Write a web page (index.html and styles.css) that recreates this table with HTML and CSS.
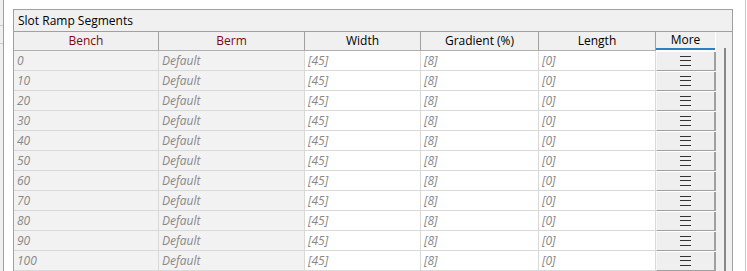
FILE: index.html
```html
<!DOCTYPE html>
<html>
<head>
<meta charset="utf-8">
<link rel="stylesheet" href="styles.css">
</head>
<body>
<div class="page">
  <div class="strip"><div class="strip-line a"></div><div class="strip-line b"></div></div>
  <div class="panel">
    <div class="title">Slot Ramp Segments</div>
    <div class="body">
      <div class="grid">
        <div class="hcell key">Bench</div>
        <div class="hcell key">Berm</div>
        <div class="hcell">Width</div>
        <div class="hcell">Gradient (%)</div>
        <div class="hcell">Length</div>
        <div class="hcell more">More</div>

        <div class="cell ro">0</div><div class="cell ro">Default</div><div class="cell">[45]</div><div class="cell">[8]</div><div class="cell">[0]</div><div class="bcell"><div class="btn"><span class="burger"></span></div></div>
        <div class="cell ro">10</div><div class="cell ro">Default</div><div class="cell">[45]</div><div class="cell">[8]</div><div class="cell">[0]</div><div class="bcell"><div class="btn"><span class="burger"></span></div></div>
        <div class="cell ro">20</div><div class="cell ro">Default</div><div class="cell">[45]</div><div class="cell">[8]</div><div class="cell">[0]</div><div class="bcell"><div class="btn"><span class="burger"></span></div></div>
        <div class="cell ro">30</div><div class="cell ro">Default</div><div class="cell">[45]</div><div class="cell">[8]</div><div class="cell">[0]</div><div class="bcell"><div class="btn"><span class="burger"></span></div></div>
        <div class="cell ro">40</div><div class="cell ro">Default</div><div class="cell">[45]</div><div class="cell">[8]</div><div class="cell">[0]</div><div class="bcell"><div class="btn"><span class="burger"></span></div></div>
        <div class="cell ro">50</div><div class="cell ro">Default</div><div class="cell">[45]</div><div class="cell">[8]</div><div class="cell">[0]</div><div class="bcell"><div class="btn"><span class="burger"></span></div></div>
        <div class="cell ro">60</div><div class="cell ro">Default</div><div class="cell">[45]</div><div class="cell">[8]</div><div class="cell">[0]</div><div class="bcell"><div class="btn"><span class="burger"></span></div></div>
        <div class="cell ro">70</div><div class="cell ro">Default</div><div class="cell">[45]</div><div class="cell">[8]</div><div class="cell">[0]</div><div class="bcell"><div class="btn"><span class="burger"></span></div></div>
        <div class="cell ro">80</div><div class="cell ro">Default</div><div class="cell">[45]</div><div class="cell">[8]</div><div class="cell">[0]</div><div class="bcell"><div class="btn"><span class="burger"></span></div></div>
        <div class="cell ro">90</div><div class="cell ro">Default</div><div class="cell">[45]</div><div class="cell">[8]</div><div class="cell">[0]</div><div class="bcell"><div class="btn"><span class="burger"></span></div></div>
        <div class="cell ro">100</div><div class="cell ro">Default</div><div class="cell">[45]</div><div class="cell">[8]</div><div class="cell">[0]</div><div class="bcell"><div class="btn"><span class="burger"></span></div></div>
      </div>
      <div class="scroll"><div class="thumb"></div></div>
    </div>
  </div>
  <div class="rightline"></div>
</div>
</body>
</html>
```
FILE: styles.css
```css
html, body {
  margin: 0;
  padding: 0;
  background: #ffffff;
  height: 271px;
  overflow: hidden;
}
.page {
  display: flex;
  align-items: flex-start;
  height: 271px;
  overflow: hidden;
  font-family: "Open Sans", "Noto Sans", sans-serif;
  font-size: 12px;
  color: #000;
}
.strip {
  width: 3px;
  height: 271px;
  background: #f0f0f0;
  border-right: 1px solid #a0a0a0;
  display: flex;
  flex-direction: column;
}
.strip-line { height: 1px; background: #c8c8c8; }
.strip-line.a { margin-top: 25px; }
.strip-line.b { margin-top: 17px; }
.panel {
  box-sizing: border-box;
  margin-left: 9px;
  margin-top: 9px;
  width: 720px;
  height: 262px;
  overflow: hidden;
  border: 1px solid #a0a0a0;
  border-bottom: none;
  background: #f0f0f0;
  display: flex;
  flex-direction: column;
}
.title {
  flex: none;
  height: 21px;
  line-height: 21px;
  padding-left: 4px;
  background: #f0f0f0;
  border-bottom: 1px solid #a0a0a0;
}
.body {
  display: flex;
  flex: 1;
}
.grid {
  display: grid;
  grid-template-columns: 145px 146px 116px 118px 117px 60px;
  grid-auto-rows: 20px;
  grid-template-rows: 19px;
  align-content: start;
  background: #fff;
}
.hcell {
  height: 19px;
  line-height: 18px;
  text-align: center;
  background: #f0f0f0;
  border-right: 1px solid #a0a0a0;
  border-bottom: 1px solid #b0b0b0;
  box-sizing: border-box;
}
.hcell.key { color: #7a0a10; }
.hcell.more {
  border-right: none;
  line-height: 16px;
  border-bottom: 2px solid #2f7fc4;
  height: 18px;
  width: 59px;
}
.cell {
  box-sizing: border-box;
  border-right: 1px solid #d9d9d9;
  border-bottom: 1px solid #d9d9d9;
  padding-left: 3px;
  padding-top: 1px;
  line-height: 18px;
  color: #888888;
  font-style: italic;
  background: #ffffff;
}
.cell.ro { background: #f2f2f2; }
.bcell {
  box-sizing: border-box;
  background: #ffffff;
  padding-top: 1px;
}
.btn {
  box-sizing: border-box;
  height: 19px;
  width: 60px;
  background: #efefef;
  border-left: 1px solid #f8f8f8;
  border-right: 2px solid #a0a0a0;
  border-bottom: 1px solid #a0a0a0;
  display: flex;
  align-items: center;
  justify-content: center;
}
.burger {
  display: block;
  width: 11px;
  height: 8px;
  border-top: 1px solid #333;
  border-bottom: 1px solid #333;
  position: relative;
}
.burger::after {
  content: "";
  position: absolute;
  left: 0;
  right: 0;
  top: 3px;
  height: 1px;
  background: #333;
}
.scroll {
  width: 16px;
  background: #f0f0f0;
  display: flex;
  justify-content: center;
}
.thumb {
  width: 2px;
  margin-top: 16px;
  margin-left: 1px;
  background: #888888;
  height: 240px;
}
.rightline {
  margin-left: 12px;
  width: 1px;
  height: 271px;
  background: #c8c8c8;
}
```
